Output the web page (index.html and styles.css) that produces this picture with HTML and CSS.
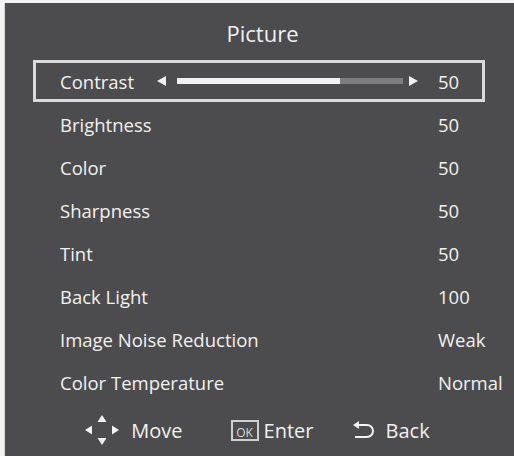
FILE: index.html
```html
<!DOCTYPE html>
<html lang="en">
<head>
    <meta charset="UTF-8">
    <meta name="viewport" content="width=device-width, initial-scale=1.0">
    <title>Picture</title>
    <link rel="stylesheet" href="styles.css">
</head>
<body>
    <div class="osd">
        <h1 class="osd-title">Picture</h1>

        <ul class="menu">
            <li class="menu-row selected">
                <span class="label label-short">Contrast</span>
                <div class="slider">
                    <span class="arrow arrow-left"></span>
                    <div class="track"><div class="fill" style="width: 72%"></div></div>
                    <span class="arrow arrow-right"></span>
                </div>
                <span class="value">50</span>
            </li>
            <li class="menu-row">
                <span class="label">Brightness</span>
                <span class="value">50</span>
            </li>
            <li class="menu-row">
                <span class="label">Color</span>
                <span class="value">50</span>
            </li>
            <li class="menu-row">
                <span class="label">Sharpness</span>
                <span class="value">50</span>
            </li>
            <li class="menu-row">
                <span class="label">Tint</span>
                <span class="value">50</span>
            </li>
            <li class="menu-row">
                <span class="label">Back Light</span>
                <span class="value">100</span>
            </li>
            <li class="menu-row">
                <span class="label">Image Noise Reduction</span>
                <span class="value">Weak</span>
            </li>
            <li class="menu-row">
                <span class="label">Color Temperature</span>
                <span class="value">Normal</span>
            </li>
        </ul>

        <div class="hints">
            <div class="hint hint-move">
                <svg class="icon-dpad" width="34" height="30" viewBox="0 0 34 30">
                    <polygon points="0,15 7,10.5 7,19.5" />
                    <polygon points="34,15 27,10.5 27,19.5" />
                    <polygon points="17,0 12.5,7 21.5,7" />
                    <polygon points="17,30 12.5,23 21.5,23" />
                </svg>
                <span>Move</span>
            </div>
            <div class="hint hint-enter">
                <span class="icon-ok">OK</span>
                <span>Enter</span>
            </div>
            <div class="hint hint-back">
                <svg class="icon-back" width="24" height="18" viewBox="0 0 24 18">
                    <polygon points="1,4 7,0 7,8" />
                    <path d="M6 4 H15 A6 6 0 0 1 15 16 H3" />
                </svg>
                <span>Back</span>
            </div>
        </div>
    </div>
</body>
</html>
```

FILE: styles.css
```css
html, body {
    height: 100%;
}

body {
    margin: 0;
    padding: 3px 0 0 4px;
    box-sizing: border-box;
    background-color: #f3f3f3;
    font-family: "Open Sans", "DejaVu Sans", sans-serif;
    color: #f2f2f2;
}

.osd {
    height: 100%;
    background-color: #4c4b4d;
    border-left: 1px solid #d6d6d6;
    box-sizing: border-box;
    display: flex;
    flex-direction: column;
}

.osd-title {
    margin: 0;
    padding-top: 17px;
    padding-left: 6px;
    height: 26px;
    line-height: 26px;
    margin-bottom: 14px;
    text-align: center;
    font-size: 22px;
    font-weight: normal;
}

.menu {
    list-style: none;
    margin: 0 0 0 28px;
    padding: 0;
    width: 452px;
}

.menu-row {
    display: flex;
    align-items: center;
    height: 43px;
    box-sizing: border-box;
    border: 3px solid transparent;
    padding-left: 24px;
    font-size: 18.5px;
    white-space: nowrap;
}

.menu-row.selected {
    height: 42px;
    margin-bottom: 1px;
    border-color: #dadada;
}

.label {
    flex: 1;
}

.label-short {
    flex: none;
    width: 97px;
}

.value {
    width: 44px;
    overflow: visible;
}

.slider {
    flex: 1;
    display: flex;
    align-items: center;
    margin-right: 20px;
}

.arrow {
    width: 0;
    height: 0;
    border-top: 5px solid transparent;
    border-bottom: 5px solid transparent;
}

.arrow-left {
    border-right: 9px solid #f2f2f2;
    margin-right: 11px;
}

.arrow-right {
    border-left: 9px solid #f2f2f2;
    margin-left: 6px;
}

.track {
    flex: 1;
    height: 6px;
    background-color: #7e7d7f;
}

.fill {
    height: 100%;
    background-color: #f2f2f2;
}

.hints {
    flex: 1;
    display: flex;
    justify-content: center;
    align-items: center;
    font-size: 20px;
    padding-right: 4px;
}

.hint {
    display: flex;
    align-items: center;
}

.hint-move {
    gap: 12px;
}

.hint-enter {
    gap: 5px;
    margin-left: 48px;
}

.hint-back {
    gap: 10px;
    margin-left: 38px;
}

.icon-dpad polygon {
    fill: #f2f2f2;
}

.icon-ok {
    display: inline-block;
    width: 24px;
    height: 17px;
    border: 2px solid #cfcfcf;
    font-size: 12px;
    line-height: 21px;
    text-align: center;
    color: #d8d8d8;
    overflow: hidden;
}

.icon-back polygon {
    fill: #f2f2f2;
}

.icon-back path {
    fill: none;
    stroke: #f2f2f2;
    stroke-width: 2;
}
```
